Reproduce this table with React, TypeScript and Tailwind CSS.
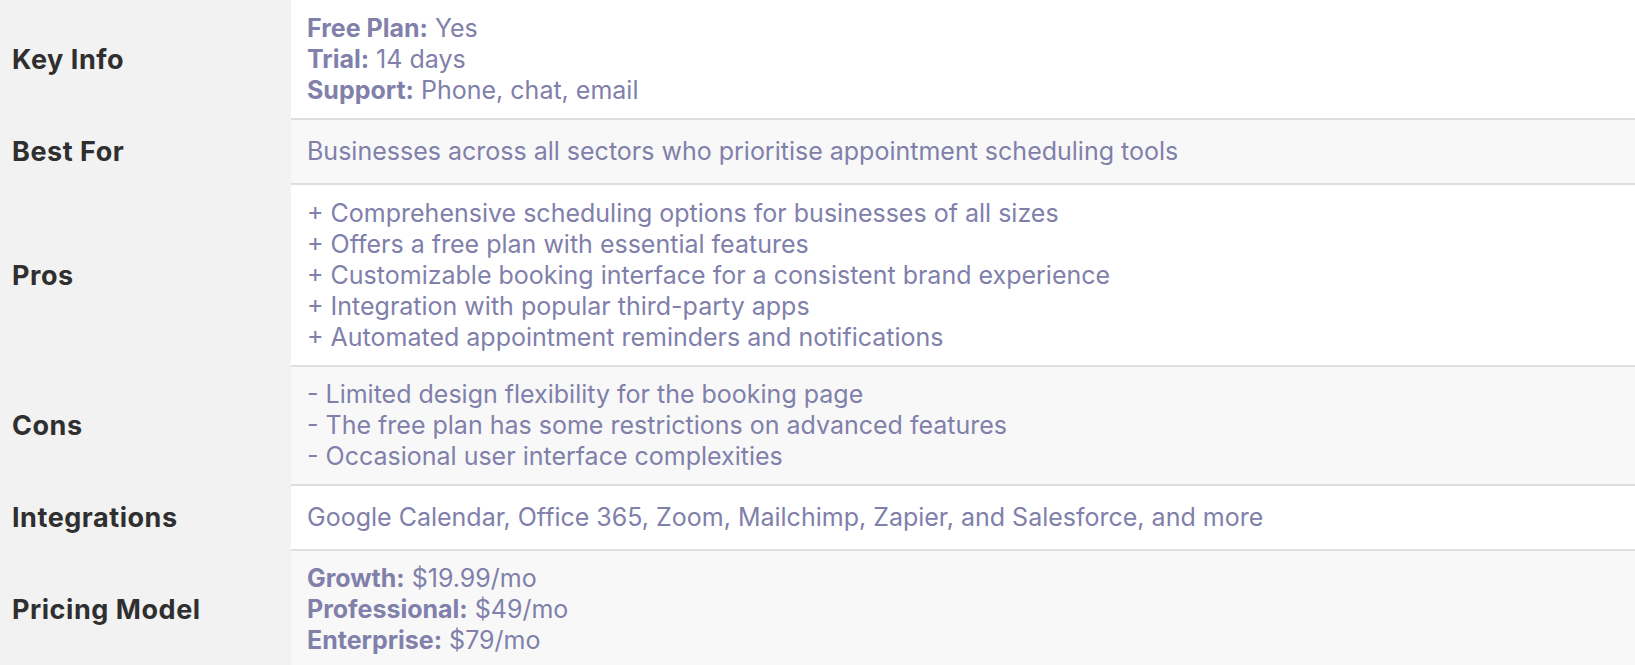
const rows: { label: string; lines: React.ReactNode[]; shade: boolean; pad: string }[] = [
  {
    label: 'Key Info',
    shade: false,
    pad: 'pt-[13px] pb-[12px]',
    lines: [
      <><b className="font-bold">Free Plan:</b> Yes</>,
      <><b className="font-bold">Trial:</b> 14 days</>,
      <><b className="font-bold">Support:</b> Phone, chat, email</>,
    ],
  },
  {
    label: 'Best For',
    shade: true,
    pad: 'py-[16px]',
    lines: ['Businesses across all sectors who prioritise appointment scheduling tools'],
  },
  {
    label: 'Pros',
    shade: false,
    pad: 'pt-[13px] pb-[12px]',
    lines: [
      '+ Comprehensive scheduling options for businesses of all sizes',
      '+ Offers a free plan with essential features',
      '+ Customizable booking interface for a consistent brand experience',
      '+ Integration with popular third-party apps',
      '+ Automated appointment reminders and notifications',
    ],
  },
  {
    label: 'Cons',
    shade: true,
    pad: 'py-[12px]',
    lines: [
      '- Limited design flexibility for the booking page',
      '- The free plan has some restrictions on advanced features',
      '- Occasional user interface complexities',
    ],
  },
  {
    label: 'Integrations',
    shade: false,
    pad: 'py-[16px]',
    lines: ['Google Calendar, Office 365, Zoom, Mailchimp, Zapier, and Salesforce, and more'],
  },
  {
    label: 'Pricing Model',
    shade: true,
    pad: 'py-[12px]',
    lines: [
      <><b className="font-bold">Growth:</b> $19.99/mo</>,
      <><b className="font-bold">Professional:</b> $49/mo</>,
      <><b className="font-bold">Enterprise:</b> $79/mo</>,
    ],
  },
];

export default function App() {
  return (
    <div className="w-[1635px] h-[665px] overflow-hidden bg-white font-['Inter',sans-serif]">
      {rows.map((row, i) => (
        <div key={i} className="flex">
          <div className="w-[291px] shrink-0 bg-[#f2f2f2] flex items-center pl-[12px] text-[27px] font-bold tracking-[0.02em] text-[#2f2f2f]">
            {row.label}
          </div>
          <div
            className={`flex-1 border-b-2 border-[#dedede] pl-[16px] text-[25px] leading-[31px] text-[#8080ab] ${
              row.shade ? 'bg-[#f8f8f8]' : 'bg-white'
            } ${row.pad}`}
          >
            {row.lines.map((line, j) => (
              <div key={j}>{line}</div>
            ))}
          </div>
        </div>
      ))}
    </div>
  );
}
